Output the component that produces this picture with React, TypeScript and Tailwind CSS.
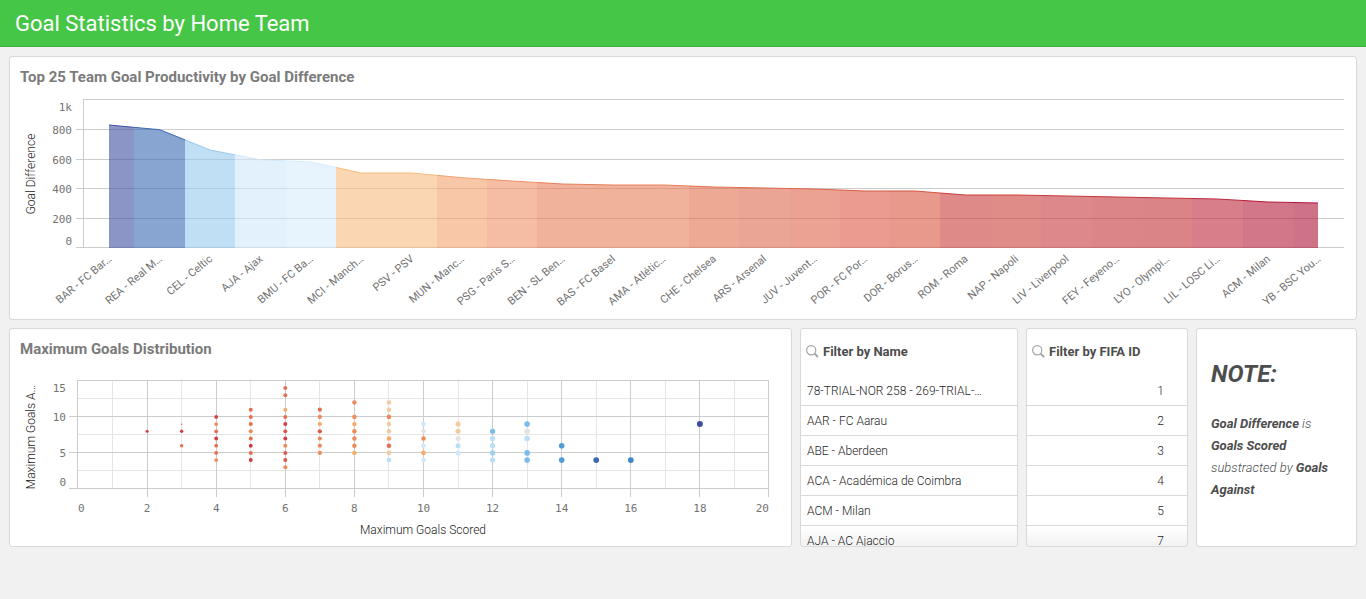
import React from "react";

type Team = { label: string; y: number; color: string };

// y is the top of the area in chart units; the baseline sits at 156.
const teams: Team[] = [
  { label: "BAR - FC Bar…", y: 33, color: "#3f50a0" },
  { label: "REA - Real M…", y: 37.7, color: "#3969b4" },
  { label: "CEL - Celtic", y: 58, color: "#96caee" },
  { label: "AJA - Ajax", y: 67.8, color: "#cfe8fa" },
  { label: "BMU - FC Ba…", y: 70, color: "#d7edfc" },
  { label: "MCI - Manch…", y: 81, color: "#f8bb7f" },
  { label: "PSV - PSV", y: 81, color: "#f8bb7f" },
  { label: "MUN - Manc…", y: 85.7, color: "#f3a26e" },
  { label: "PSG - Paris S…", y: 89, color: "#ee9166" },
  { label: "BEN - SL Ben…", y: 92, color: "#e87f5a" },
  { label: "BAS - FC Basel", y: 93, color: "#e87f5a" },
  { label: "AMA - Atlétic…", y: 93, color: "#e87f5a" },
  { label: "CHE - Chelsea", y: 95, color: "#e3704e" },
  { label: "ARS - Arsenal", y: 96, color: "#de694e" },
  { label: "JUV - Juvent…", y: 97, color: "#de6449" },
  { label: "POR - FC Por…", y: 99, color: "#da5a44" },
  { label: "DOR - Borus…", y: 99, color: "#d7553e" },
  { label: "ROM - Roma", y: 103, color: "#c83c3a" },
  { label: "NAP - Napoli", y: 103, color: "#ca3e39" },
  { label: "LIV - Liverpool", y: 104, color: "#c6393c" },
  { label: "FEY - Feyeno…", y: 105, color: "#c3343a" },
  { label: "LYO - Olympi…", y: 106, color: "#c33238" },
  { label: "LIL - LOSC Li…", y: 107, color: "#be283e" },
  { label: "ACM - Milan", y: 110, color: "#b41b3a" },
  { label: "YB - BSC You…", y: 111, color: "#ad1439" },
];

const STEP = 50.375;
const FIRST = 99.3;
const BASE = 156;
const teamX = (i: number) => FIRST + i * STEP;

const areaTicks = [
  { text: "1k", line: 7, base: 19 },
  { text: "800", line: 37, base: 42 },
  { text: "600", line: 67, base: 72 },
  { text: "400", line: 96, base: 101 },
  { text: "200", line: 126, base: 131 },
  { text: "0", line: 155, base: 153 },
];

const mono = "font-['DejaVu_Sans_Mono',monospace] text-[11px] fill-[#737373]";

function AreaChart() {
  return (
    <svg viewBox="0 0 1346 227" className="block h-auto w-full" role="img" aria-label="Goal difference of the top 25 teams">
      {areaTicks.map((t, i) => (
        <g key={t.text}>
          <rect x={i === 0 ? 73 : 66} y={t.line} width={i === 0 ? 1261 : 1268} height={1} fill="#cccccc" />
          <text x={62} y={t.base} textAnchor="end" className={mono}>{t.text}</text>
        </g>
      ))}
      <rect x={73} y={7} width={1} height={149} fill="#cccccc" />
      {teams.map((t, i) => {
        const x = teamX(i);
        const prev = teams[i - 1];
        const next = teams[i + 1];
        const edge = Math.round(x);
        const pts: [number, number][] = [];
        if (prev) pts.push([Math.round(x - STEP / 2), (prev.y + t.y) / 2]);
        pts.push([prev && next ? x : edge, t.y]);
        if (next) pts.push([Math.round(x + STEP / 2), (next.y + t.y) / 2]);
        const top = pts.map((p) => p.join(",")).join(" ");
        const area = `${pts[0][0]},${BASE} ${top} ${pts[pts.length - 1][0]},${BASE}`;
        return (
          <g key={t.label}>
            <polygon points={area} fill={t.color} fillOpacity={0.6} />
            <polyline points={top} fill="none" stroke={t.color} strokeWidth={1} />
            <text
              transform={`translate(${x + 3} 168) rotate(-40)`}
              textAnchor="end"
              className="fill-[#737373] text-[11px]"
            >
              {t.label}
            </text>
          </g>
        );
      })}
      <text transform="translate(25 82) rotate(-90)" textAnchor="middle" className="fill-[#1a1a1a] text-[12px] font-light">
        Goal Difference
      </text>
    </svg>
  );
}

const R = "#cf4044";
const V = "#dd5a47";
const T = "#e56f50";
const O = "#ef8b5b";
const A = "#f6ab68";
const S = "#f3cba0";
const G = "#e2e4e1";
const P = "#cfe8fb";
const L = "#bcdff8";
const B = "#7cbcea";

type Dot = [number, string];
const columns: { x: number; r: number; dots: Dot[] }[] = [
  { x: 2, r: 1.5, dots: [[8, R]] },
  { x: 3, r: 1.7, dots: [[8, R], [6, T]] },
  { x: 3, r: 0.7, dots: [[9, R]] },
  { x: 4, r: 1.9, dots: [[10, R], [9, O], [8, T], [7, R], [6, T], [5, T], [4, O]] },
  { x: 5, r: 2, dots: [[11, T], [10, T], [9, T], [8, O], [7, T], [6, R], [5, T], [4, R]] },
  { x: 6, r: 2, dots: [[14, T], [13, T], [11, A], [10, T], [9, R], [8, V], [7, R], [6, O], [5, V], [4, V], [3, O]] },
  { x: 7, r: 2.1, dots: [[11, T], [10, O], [9, A], [8, V], [7, O], [6, O], [5, O]] },
  { x: 8, r: 2.2, dots: [[12, O], [10, O], [9, A], [8, O], [7, O], [6, O], [5, A]] },
  { x: 9, r: 2.3, dots: [[12, S], [11, S], [10, O], [9, S], [8, S], [7, A], [6, T], [5, S], [4, L]] },
  { x: 10, r: 2.3, dots: [[9, P], [8, G], [7, O], [6, P], [5, A], [4, P]] },
  { x: 11, r: 2.5, dots: [[9, S], [8, S], [7, G], [6, L], [5, P]] },
  { x: 12, r: 2.6, dots: [[8, B], [7, L], [6, L], [5, "#9fd0f2"], [4, L]] },
  { x: 13, r: 2.8, dots: [[9, B], [8, G], [7, L], [5, B], [4, B]] },
  { x: 14, r: 2.8, dots: [[6, "#4f9cd6"], [4, "#4f9cd6"]] },
  { x: 15, r: 2.9, dots: [[4, "#3c68b4"]] },
  { x: 16, r: 2.9, dots: [[4, "#3c87c8"]] },
  { x: 18, r: 3, dots: [[9, "#3b4da2"]] },
];

const scatterX = (v: number) => 68 + v * 34.55;
const scatterY = (v: number) => 123.9 - v * 7.2;
const gridX = (v: number) => Math.round(67.48 + v * 34.55);
const verticals = Array.from({ length: 21 }, (_, i) => i);
const horizontals = [15, 51, 87, 123];
const scatterTicks = [
  { text: "15", base: 27 },
  { text: "10", base: 56 },
  { text: "5", base: 92 },
  { text: "0", base: 121 },
];

function ScatterChart() {
  return (
    <svg viewBox="0 0 781 181" className="block h-auto w-full" role="img" aria-label="Maximum goals against by maximum goals scored">
      {verticals.filter((i) => i % 2 === 1).map((i) => (
        <rect key={i} x={gridX(i)} y={15} width={1} height={108} fill="#e6e6e6" />
      ))}
      {[33, 69, 105].map((y) => (
        <rect key={y} x={67} y={y} width={691} height={1} fill="#e6e6e6" />
      ))}
      {verticals.filter((i) => i % 2 === 0).map((i) => (
        <rect key={i} x={gridX(i)} y={15} width={1} height={i === 0 ? 108 : 117} fill="#cccccc" />
      ))}
      {horizontals.map((y) => (
        <rect key={y} x={y === 15 ? 67 : 59} y={y} width={y === 15 ? 692 : 700} height={1} fill="#cccccc" />
      ))}
      {columns.map((c) =>
        c.dots.map(([v, color]) => (
          <circle key={`${c.x}-${v}`} cx={scatterX(c.x)} cy={scatterY(v)} r={c.r} fill={color} />
        ))
      )}
      {scatterTicks.map((t) => (
        <text key={t.text} x={56} y={t.base} textAnchor="end" className={mono}>{t.text}</text>
      ))}
      {verticals.filter((i) => i % 2 === 0).map((i) => (
        <text
          key={i}
          x={i === 20 ? 759 : i === 0 ? 68 : scatterX(i)}
          y={147}
          textAnchor={i === 20 ? "end" : i === 0 ? "start" : "middle"}
          className={mono}
        >
          {i}
        </text>
      ))}
      <text x={413} y={169} textAnchor="middle" className="fill-[#1a1a1a] text-[12px] font-light">Maximum Goals Scored</text>
      <text transform="translate(25 72) rotate(-90)" textAnchor="middle" className="fill-[#1a1a1a] text-[12px] font-light">
        Maximum Goals A…
      </text>
    </svg>
  );
}

function SearchIcon() {
  return (
    <svg viewBox="0 0 13 13" className="size-[13px]" fill="none" stroke="#a6a6a6" aria-hidden="true">
      <circle cx="5.2" cy="5.2" r="4.6" strokeWidth="1.2" />
      <path d="M8.6 8.6 L12 12" strokeWidth="2" />
    </svg>
  );
}

const card = "overflow-hidden rounded-[3px] border border-[#d9d9d9] bg-white";

function FilterPanel({ title, items, numeric }: { title: string; items: string[]; numeric?: boolean }) {
  return (
    <section className={`${card} relative h-0 min-h-full`}>
      <div className="flex h-[47px] items-center gap-1 pb-0.5 pl-[5px]">
        <button type="button" aria-label={`Search: ${title}`}>
          <SearchIcon />
        </button>
        <h2 className="text-[13px] leading-4 font-bold whitespace-nowrap text-[#4d4d4d]">{title}</h2>
      </div>
      <ul>
        {items.map((item) => (
          <li key={item} className="border-b border-[#d9d9d9]">
            <button
              type="button"
              className={
                numeric
                  ? "block h-[29px] w-full pr-[23px] text-right text-xs font-light text-[#262626]"
                  : "block h-[29px] w-full truncate pr-[7px] pl-1.5 text-left text-xs font-light text-[#262626]"
              }
            >
              {item}
            </button>
          </li>
        ))}
      </ul>
      <div className="pointer-events-none absolute inset-x-0 bottom-0 h-5 bg-linear-to-b from-transparent to-black/5" />
    </section>
  );
}

const names = [
  "78-TRIAL-NOR 258 - 269-TRIAL-…",
  "AAR - FC Aarau",
  "ABE - Aberdeen",
  "ACA - Académica de Coimbra",
  "ACM - Milan",
  "AJA - AC Ajaccio",
];

export default function App() {
  return (
    <div className="min-h-screen bg-[#f1f1f1] font-[Roboto,sans-serif]">
      <header className="border-b border-[#3fb23f] bg-[#46c646] px-[15px] pt-[9px] pb-[7px]">
        <h1 className="text-[22px] leading-[30px] text-white">Goal Statistics by Home Team</h1>
      </header>
      <main className="flex flex-col gap-2 p-[9px]">
        <section className={card}>
          <h2 className="px-2.5 pt-2.5 pb-[5px] text-[15px] leading-5 font-bold text-[#7b7b7b]">
            Top 25 Team Goal Productivity by Goal Difference
          </h2>
          <AreaChart />
        </section>
        <div className="grid grid-cols-[783fr_218fr_162fr_161fr] gap-2">
          <section className={card}>
            <h2 className="px-2.5 pt-2.5 pb-1.5 text-[15px] leading-5 font-bold text-[#7b7b7b]">
              Maximum Goals Distribution
            </h2>
            <ScatterChart />
          </section>
          <FilterPanel title="Filter by Name" items={names} />
          <FilterPanel title="Filter by FIFA ID" items={["1", "2", "3", "4", "5", "7"]} numeric />
          <section className={`${card} px-3.5 pt-[29px] text-[#4d4d4d] italic`}>
            <h2 className="text-2xl font-bold">NOTE:</h2>
            <p className="mt-[23px] text-[13px] leading-[22px] font-light">
              <strong className="font-bold">Goal Difference</strong> is{" "}
              <strong className="font-bold">Goals Scored</strong>
              <br />
              substracted by <strong className="font-bold">Goals Against</strong>
            </p>
          </section>
        </div>
      </main>
    </div>
  );
}
